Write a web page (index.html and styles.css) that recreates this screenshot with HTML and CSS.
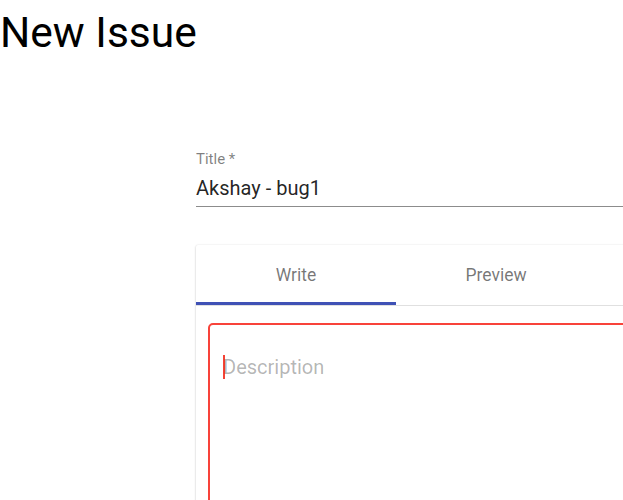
FILE: index.html
```html
<!DOCTYPE html>
<html>
<head>
<meta charset="utf-8">
<link rel="stylesheet" href="styles.css">
</head>
<body>
<h1 class="page-title">New Issue</h1>
<form class="issue-form">
  <div class="field">
    <label class="field-label">Title *</label>
    <div class="field-input">Akshay - bug1</div>
  </div>
  <div class="card">
    <div class="tabs">
      <div class="tab active">Write</div>
      <div class="tab">Preview</div>
    </div>
    <div class="editor">
      <div class="outline">
        <span class="caret"></span><span class="placeholder">Description</span>
      </div>
    </div>
  </div>
</form>
</body>
</html>
```
FILE: styles.css
```css
html, body {
  margin: 0;
  padding: 0;
  background: #fff;
  font-family: Roboto, "Liberation Sans", sans-serif;
  overflow: hidden;
}
.page-title {
  margin: 0;
  padding: 8px 0 0 0;
  font-size: 42.5px;
  font-weight: 400;
  line-height: 50px;
  color: #000;
}
.issue-form {
  padding: 93px 0 0 196px;
}
.field {
  display: flex;
  flex-direction: column;
  width: 440px;
}
.field-label {
  font-size: 15px;
  line-height: 17px;
  color: rgba(0, 0, 0, 0.5);
}
.field-input {
  margin-top: 9px;
  font-size: 20px;
  line-height: 23px;
  padding: 0 0 6px;
  color: rgba(0, 0, 0, 0.87);
  border-bottom: 1px solid rgba(0, 0, 0, 0.45);
}
.card {
  margin-top: 38px;
  width: 460px;
  background: #fff;
  box-shadow: 0 0 2px rgba(0, 0, 0, 0.14), -1px 1px 2px rgba(0, 0, 0, 0.06);
  border-radius: 2px 0 0 0;
}
.tabs {
  display: flex;
  height: 60px;
  border-bottom: 1px solid #e0e0e0;
}
.tab {
  width: 200px;
  display: flex;
  align-items: center;
  justify-content: center;
  font-size: 17.5px;
  color: rgba(0, 0, 0, 0.54);
  box-sizing: border-box;
  padding-top: 0;
}
.tab.active {
  border-bottom: 3px solid #3f51b5;
  padding-top: 3px;
}
.editor {
  padding: 17px 0 0 12px;
}
.outline {
  height: 200px;
  border: 2px solid #f8433a;
  border-radius: 5px;
  padding: 31px 13px;
  display: flex;
  align-items: flex-start;
}
.caret {
  display: block;
  flex: none;
  width: 2px;
  height: 24px;
  margin-top: -1px;
  margin-right: -2px;
  background: #f44336;
}
.placeholder {
  font-size: 20px;
  line-height: 23px;
  color: rgba(0, 0, 0, 0.3);
}
```
